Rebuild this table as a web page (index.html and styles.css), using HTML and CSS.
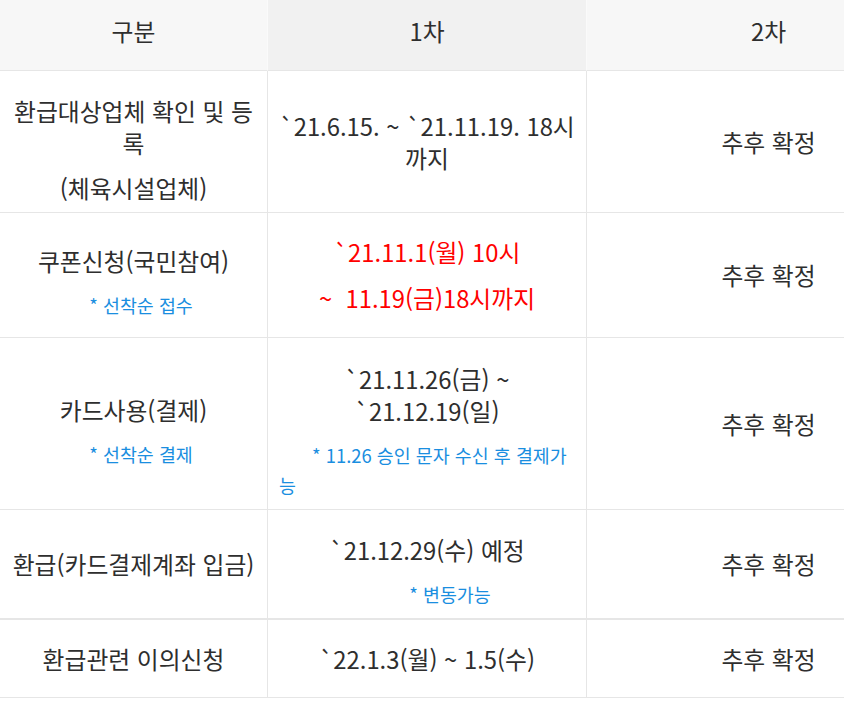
FILE: index.html
```html
<!DOCTYPE html>
<html lang="ko">
<head>
<meta charset="utf-8">
<title>환급 일정</title>
<link rel="stylesheet" href="styles.css">
</head>
<body>
<div class="wrap">
  <div class="table">
    <div class="th c1">구분</div>
    <div class="th c2 dark">1차</div>
    <div class="th c3">2차</div>

    <div class="td c1"><div class="stack"><p class="main">환급대상업체 확인 및 등록</p><p class="main">(체육시설업체)</p></div></div>
    <div class="td c2"><p class="main">`21.6.15. ~ `21.11.19. 18시 까지</p></div>
    <div class="td c3"><p class="main">추후 확정</p></div>

    <div class="td c1"><div class="stack"><p class="main">쿠폰신청(국민참여)</p><p class="note indent">* 선착순 접수</p></div></div>
    <div class="td c2"><p class="main red">`21.11.1(월) 10시</p><p class="main red">~&nbsp; 11.19(금)18시까지</p></div>
    <div class="td c3"><p class="main">추후 확정</p></div>

    <div class="td c1"><div class="stack"><p class="main">카드사용(결제)</p><p class="note indent">* 선착순 결제</p></div></div>
    <div class="td c2"><div class="stack"><p class="main">`21.11.26(금) ~ `21.12.19(일)</p><p class="note left">* 11.26 승인 문자 수신 후 결제가능</p></div></div>
    <div class="td c3"><p class="main">추후 확정</p></div>

    <div class="td c1 thick"><p class="main">환급(카드결제계좌 입금)</p></div>
    <div class="td c2 thick"><div class="stack"><p class="main">`21.12.29(수) 예정</p><p class="note shifted">* 변동가능</p></div></div>
    <div class="td c3 thick"><p class="main">추후 확정</p></div>

    <div class="td c1"><p class="main">환급관련 이의신청</p></div>
    <div class="td c2"><p class="main">`22.1.3(월) ~ 1.5(수)</p></div>
    <div class="td c3"><p class="main">추후 확정</p></div>
  </div>
</div>
</body>
</html>
```
FILE: styles.css
```css
html, body {
  margin: 0;
  padding: 0;
  background: #ffffff;
}

body {
  font-family: "Noto Sans CJK KR", "Noto Sans", sans-serif;
  color: #2e2e2e;
}

.wrap {
  width: 844px;
  overflow: hidden;
}

.table {
  width: 950px;
  display: grid;
  grid-template-columns: 268px 319px 363px;
  grid-template-rows: 71px 142px 125px 172px 110px 78px;
}

.th,
.td {
  box-sizing: border-box;
  display: flex;
  flex-direction: column;
  justify-content: center;
  text-align: center;
  border-bottom: 1px solid #e6e6e6;
  padding: 0 11px;
}

.c1,
.c2 {
  border-right: 1px solid #e6e6e6;
}

.th {
  background: #f7f7f7;
  font-size: 23.8px;
  line-height: 32px;
  padding-bottom: 8px;
}

.th.c1,
.th.c2 {
  border-right-color: #fafafa;
}

.th.dark {
  background: #f1f1f1;
}

.td.thick {
  border-bottom-width: 2px;
}

p {
  margin: 0;
}

.main {
  font-size: 23.8px;
  line-height: 32px;
}

.red {
  color: #ff0000;
  line-height: 46px;
}

.stack {
  padding-top: 15px;
}

.stack > p + p {
  margin-top: 13px;
}

.note {
  font-size: 18.4px;
  line-height: 30px;
  color: #1a8ee0;
}

.note.indent {
  padding-left: 15px;
}

.note.left {
  text-align: left;
  text-indent: 33px;
}

.note.shifted {
  padding-left: 46px;
}
```
